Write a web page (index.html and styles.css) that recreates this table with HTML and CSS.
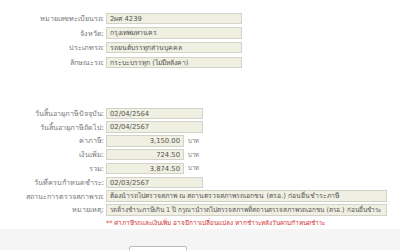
FILE: index.html
```html
<!DOCTYPE html>
<html lang="th">
<head>
<meta charset="utf-8">
<link rel="stylesheet" href="styles.css">
</head>
<body>
<div class="page">
  <div class="group g1">
    <div class="row"><span class="lbl">หมายเลขทะเบียนรถ:</span><span class="fld w-long">2ผศ 4239</span></div>
    <div class="row"><span class="lbl">จังหวัด:</span><span class="fld w-long">กรุงเทพมหานคร</span></div>
    <div class="row"><span class="lbl">ประเภทรถ:</span><span class="fld w-long">รถยนต์บรรทุกส่วนบุคคล</span></div>
    <div class="row"><span class="lbl">ลักษณะรถ:</span><span class="fld w-long">กระบะบรรทุก (ไม่มีหลังคา)</span></div>
  </div>
  <div class="group g2">
    <div class="row"><span class="lbl">วันสิ้นอายุภาษีปัจจุบัน:</span><span class="fld w-date">02/04/2564</span></div>
    <div class="row"><span class="lbl">วันสิ้นอายุภาษีถัดไป:</span><span class="fld w-date">02/04/2567</span></div>
    <div class="row"><span class="lbl">ค่าภาษี:</span><span class="fld w-num num">3,150.00</span><span class="unit">บาท</span></div>
    <div class="row"><span class="lbl">เงินเพิ่ม:</span><span class="fld w-num num">724.50</span><span class="unit">บาท</span></div>
    <div class="row"><span class="lbl">รวม:</span><span class="fld w-num num">3,874.50</span><span class="unit">บาท</span></div>
    <div class="row"><span class="lbl">วันที่ครบกำหนดชำระ:</span><span class="fld w-date">02/03/2567</span></div>
    <div class="row"><span class="lbl">สถานะการตรวจสภาพรถ:</span><span class="fld w-wide">ต้องนำรถไปตรวจสภาพ ณ สถานตรวจสภาพรถเอกชน (ตรอ.) ก่อนยื่นชำระภาษี</span></div>
    <div class="row"><span class="lbl">หมายเหตุ:</span><span class="fld w-wide remark">รถค้างชำระภาษีเกิน 1 ปี กรุณานำรถไปตรวจสภาพที่สถานตรวจสภาพรถเอกชน (ตรอ.) ก่อนยื่นชำระ</span></div>
    <div class="row note-row"><span class="lbl"></span><span class="note">** ค่าภาษีรถและเงินเพิ่ม อาจมีการเปลี่ยนแปลง หากชำระหลังวันครบกำหนดชำระ</span></div>
  </div>
  <div class="footer">
    <button class="btn">ย้อนกลับ</button>
  </div>
</div>
</body>
</html>
```
FILE: styles.css
```css
html, body {
  margin: 0;
  padding: 0;
  background: #fff;
}
.page {
  width: 400px;
  height: 250px;
  overflow: hidden;
  font-family: Tahoma, "DejaVu Sans", "Noto Sans", sans-serif;
  font-size: 6.8px;
  color: #555;
}
.group {
  display: flex;
  flex-direction: column;
}
.g1 {
  padding-top: 13px;
  gap: 3.6px;
}
.g2 {
  padding-top: 40px;
  gap: 2.8px;
}
.row {
  display: flex;
  align-items: center;
  height: 11px;
}
.lbl {
  width: 106px;
  flex: none;
  text-align: right;
  color: #777;
  font-size: 7.2px;
  white-space: nowrap;
  padding-right: 2px;
  box-sizing: border-box;
}
.fld {
  box-sizing: border-box;
  height: 11.5px;
  line-height: 10px;
  background: #efefe2;
  border: 1px solid #d2d2c8;
  padding: 0 3px;
  white-space: nowrap;
  overflow: hidden;
  color: #555;
  flex: none;
}
.w-long { width: 136px; }
.w-date { width: 97px; }
.w-num { width: 78px; }
.w-wide { width: 281px; }
.remark { font-size: 6.5px; }
.num { text-align: right; }
.unit {
  margin-left: 4px;
  color: #777;
  font-size: 6px;
}
.note-row {
  height: 9px;
}
.note {
  color: #d03030;
  white-space: nowrap;
  font-size: 6.4px;
}
.footer {
  margin-top: 2px;
  height: 30px;
  background: #f5f5f5;
  display: flex;
  justify-content: center;
}
.btn {
  margin-top: 17px;
  margin-left: -84px;
  width: 58px;
  height: 16px;
  background: #fff;
  border: 1px solid #bbb;
  border-radius: 2px;
  font-family: inherit;
  font-size: 7px;
  color: #444;
}
```
